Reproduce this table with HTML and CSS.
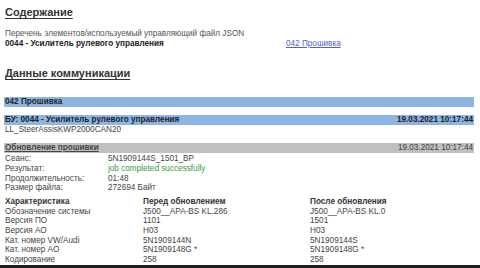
FILE: index.html
```html
<!DOCTYPE html>
<html lang="ru">
<head>
<meta charset="utf-8">
<link rel="stylesheet" href="styles.css">
</head>
<body>
<div class="page">
  <h2 class="h">Содержание</h2>
  <p class="note">Перечень элементов/используемый управляющий файл JSON</p>
  <div class="toc">
    <span class="toc-name">0044 - Усилитель рулевого управления</span>
    <a class="toc-link" href="#">042 Прошивка</a>
  </div>
  <h2 class="h h2">Данные коммуникации</h2>
  <div class="bar blue first"><span class="b">042 Прошивка</span></div>
  <div class="bar blue second"><span class="b">БУ: 0044 - Усилитель рулевого управления</span><span class="b">19.03.2021 10:17:44</span></div>
  <div class="line">LL_SteerAssisKWP2000CAN20</div>
  <div class="bar grey"><span class="b u">Обновление прошивки</span><span>19.03.2021 10:17:44</span></div>
  <div class="kv">
    <span>Сеанс:</span><span>5N1909144S_1501_BP</span>
    <span>Результат:</span><span class="ok">job completed successfully</span>
    <span>Продолжительность:</span><span>01:48</span>
    <span>Размер файла:</span><span>272694 Байт</span>
  </div>
  <div class="tbl">
    <span class="b">Характеристика</span><span class="b">Перед обновлением</span><span class="b">После обновления</span>
    <span>Обозначение системы</span><span>J500__APA-BS KL.286</span><span>J500__APA-BS KL.0</span>
    <span>Версия ПО</span><span>1101</span><span>1501</span>
    <span>Версия АО</span><span>H03</span><span>H03</span>
    <span>Кат. номер VW/Audi</span><span>5N1909144N</span><span>5N1909144S</span>
    <span>Кат. номер АО</span><span>5N1909148G *</span><span>5N1909148G *</span>
    <span>Кодирование</span><span>258</span><span>258</span>
  </div>
</div>
<div class="bottom"></div>
</body>
</html>
```
FILE: styles.css
```css
html, body {
  margin: 0;
  padding: 0;
  background: #fff;
}
body {
  width: 480px;
  height: 268px;
  overflow: hidden;
  position: relative;
  font-family: "Liberation Sans", Arial, sans-serif;
  font-size: 8.2px;
  line-height: 9.7px;
  color: #3a3a3a;
}
.page {
  padding: 5px 6px 0 5px;
}
.h {
  margin: 0;
  font-size: 11px;
  line-height: 14px;
  font-weight: bold;
  color: #333;
  text-decoration: underline;
  text-underline-offset: 2px;
}
.h2 {
  margin-top: 18px;
}
.note {
  margin: 10px 0 0;
  color: #555;
}
.toc {
  display: flex;
}
.toc-name {
  font-weight: bold;
  color: #222;
  width: 281px;
}
.toc-link {
  color: #5a5ad6;
  text-decoration: underline;
}
.b { font-weight: bold; }
.u { text-decoration: underline; }
.bar {
  display: flex;
  justify-content: space-between;
  height: 10px;
  line-height: 10px;
  margin-left: -1px;
  padding: 0 1px;
  color: #222;
}
.blue { background: #8db4e2; }
.grey { background: #c0c0c0; color: #444; }
.first { margin-top: 17px; }
.second { margin-top: 8px; }
.line { color: #444; }
.grey { margin-top: 8px; }
.kv {
  display: grid;
  grid-template-columns: 103px auto;
  color: #444;
  margin-top: 1px;
}
.ok { color: #3a9a3a; }
.tbl {
  display: grid;
  grid-template-columns: 138px 167px auto;
  margin-top: 4px;
  color: #444;
}
.tbl .b { color: #333; }
.bottom {
  position: absolute;
  left: 0;
  right: 0;
  bottom: 0;
  height: 3px;
  background: #1e1e1e;
}
```
